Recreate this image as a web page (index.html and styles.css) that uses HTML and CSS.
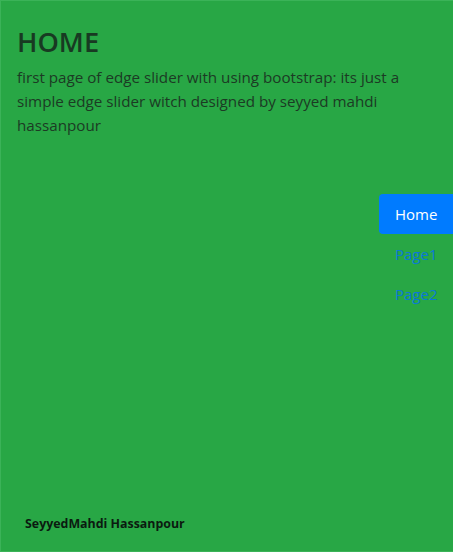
FILE: index.html
```html
<!DOCTYPE html>
<html>
<head>
<meta charset="utf-8">
<link rel="stylesheet" href="styles.css">
</head>
<body>
<div class="page">
  <div class="content">
    <h2 class="title">HOME</h2>
    <p class="lead">first page of edge slider with using bootstrap: its just a simple edge slider witch designed by seyyed mahdi hassanpour</p>
  </div>
  <div class="navrow">
    <nav class="pills">
      <a class="pill active">Home</a>
      <a class="pill">Page1</a>
      <a class="pill">Page2</a>
    </nav>
  </div>
  <footer class="footer">SeyyedMahdi Hassanpour</footer>
</div>
</body>
</html>
```
FILE: styles.css
```css
html, body {
  margin: 0;
  padding: 0;
  height: 100%;
}
body {
  background: #28a745;
  font-family: "Open Sans", "Noto Sans", sans-serif;
  color: #1c3a24;
}
.page {
  height: 552px;
  box-sizing: border-box;
  border: 1px solid #3bb358;
  border-right: 0;
  display: flex;
  flex-direction: column;
}
.content {
  padding: 24px 16px 0 16px;
}
.title {
  margin: 0 0 6px 0;
  font-size: 27.2px;
  font-weight: 600;
  line-height: 34px;
  color: #183a22;
}
.lead {
  margin: 0;
  font-size: 15.2px;
  line-height: 24px;
  color: #1c3a24;
}
.navrow {
  display: flex;
  justify-content: flex-end;
  margin-top: 57px;
}
.pills {
  display: flex;
  flex-direction: column;
  width: 74px;
}
.pill {
  display: block;
  padding: 8px 0 8px 16px;
  font-size: 15px;
  line-height: 24px;
  color: #0a78d8;
  border-radius: 4px 0 0 4px;
}
.pill.active {
  background: #007bff;
  color: #fff;
}
.footer {
  margin-top: auto;
  padding: 0 0 19px 24px;
  font-size: 12.4px;
  font-weight: 700;
  color: #0b1a10;
}
```
